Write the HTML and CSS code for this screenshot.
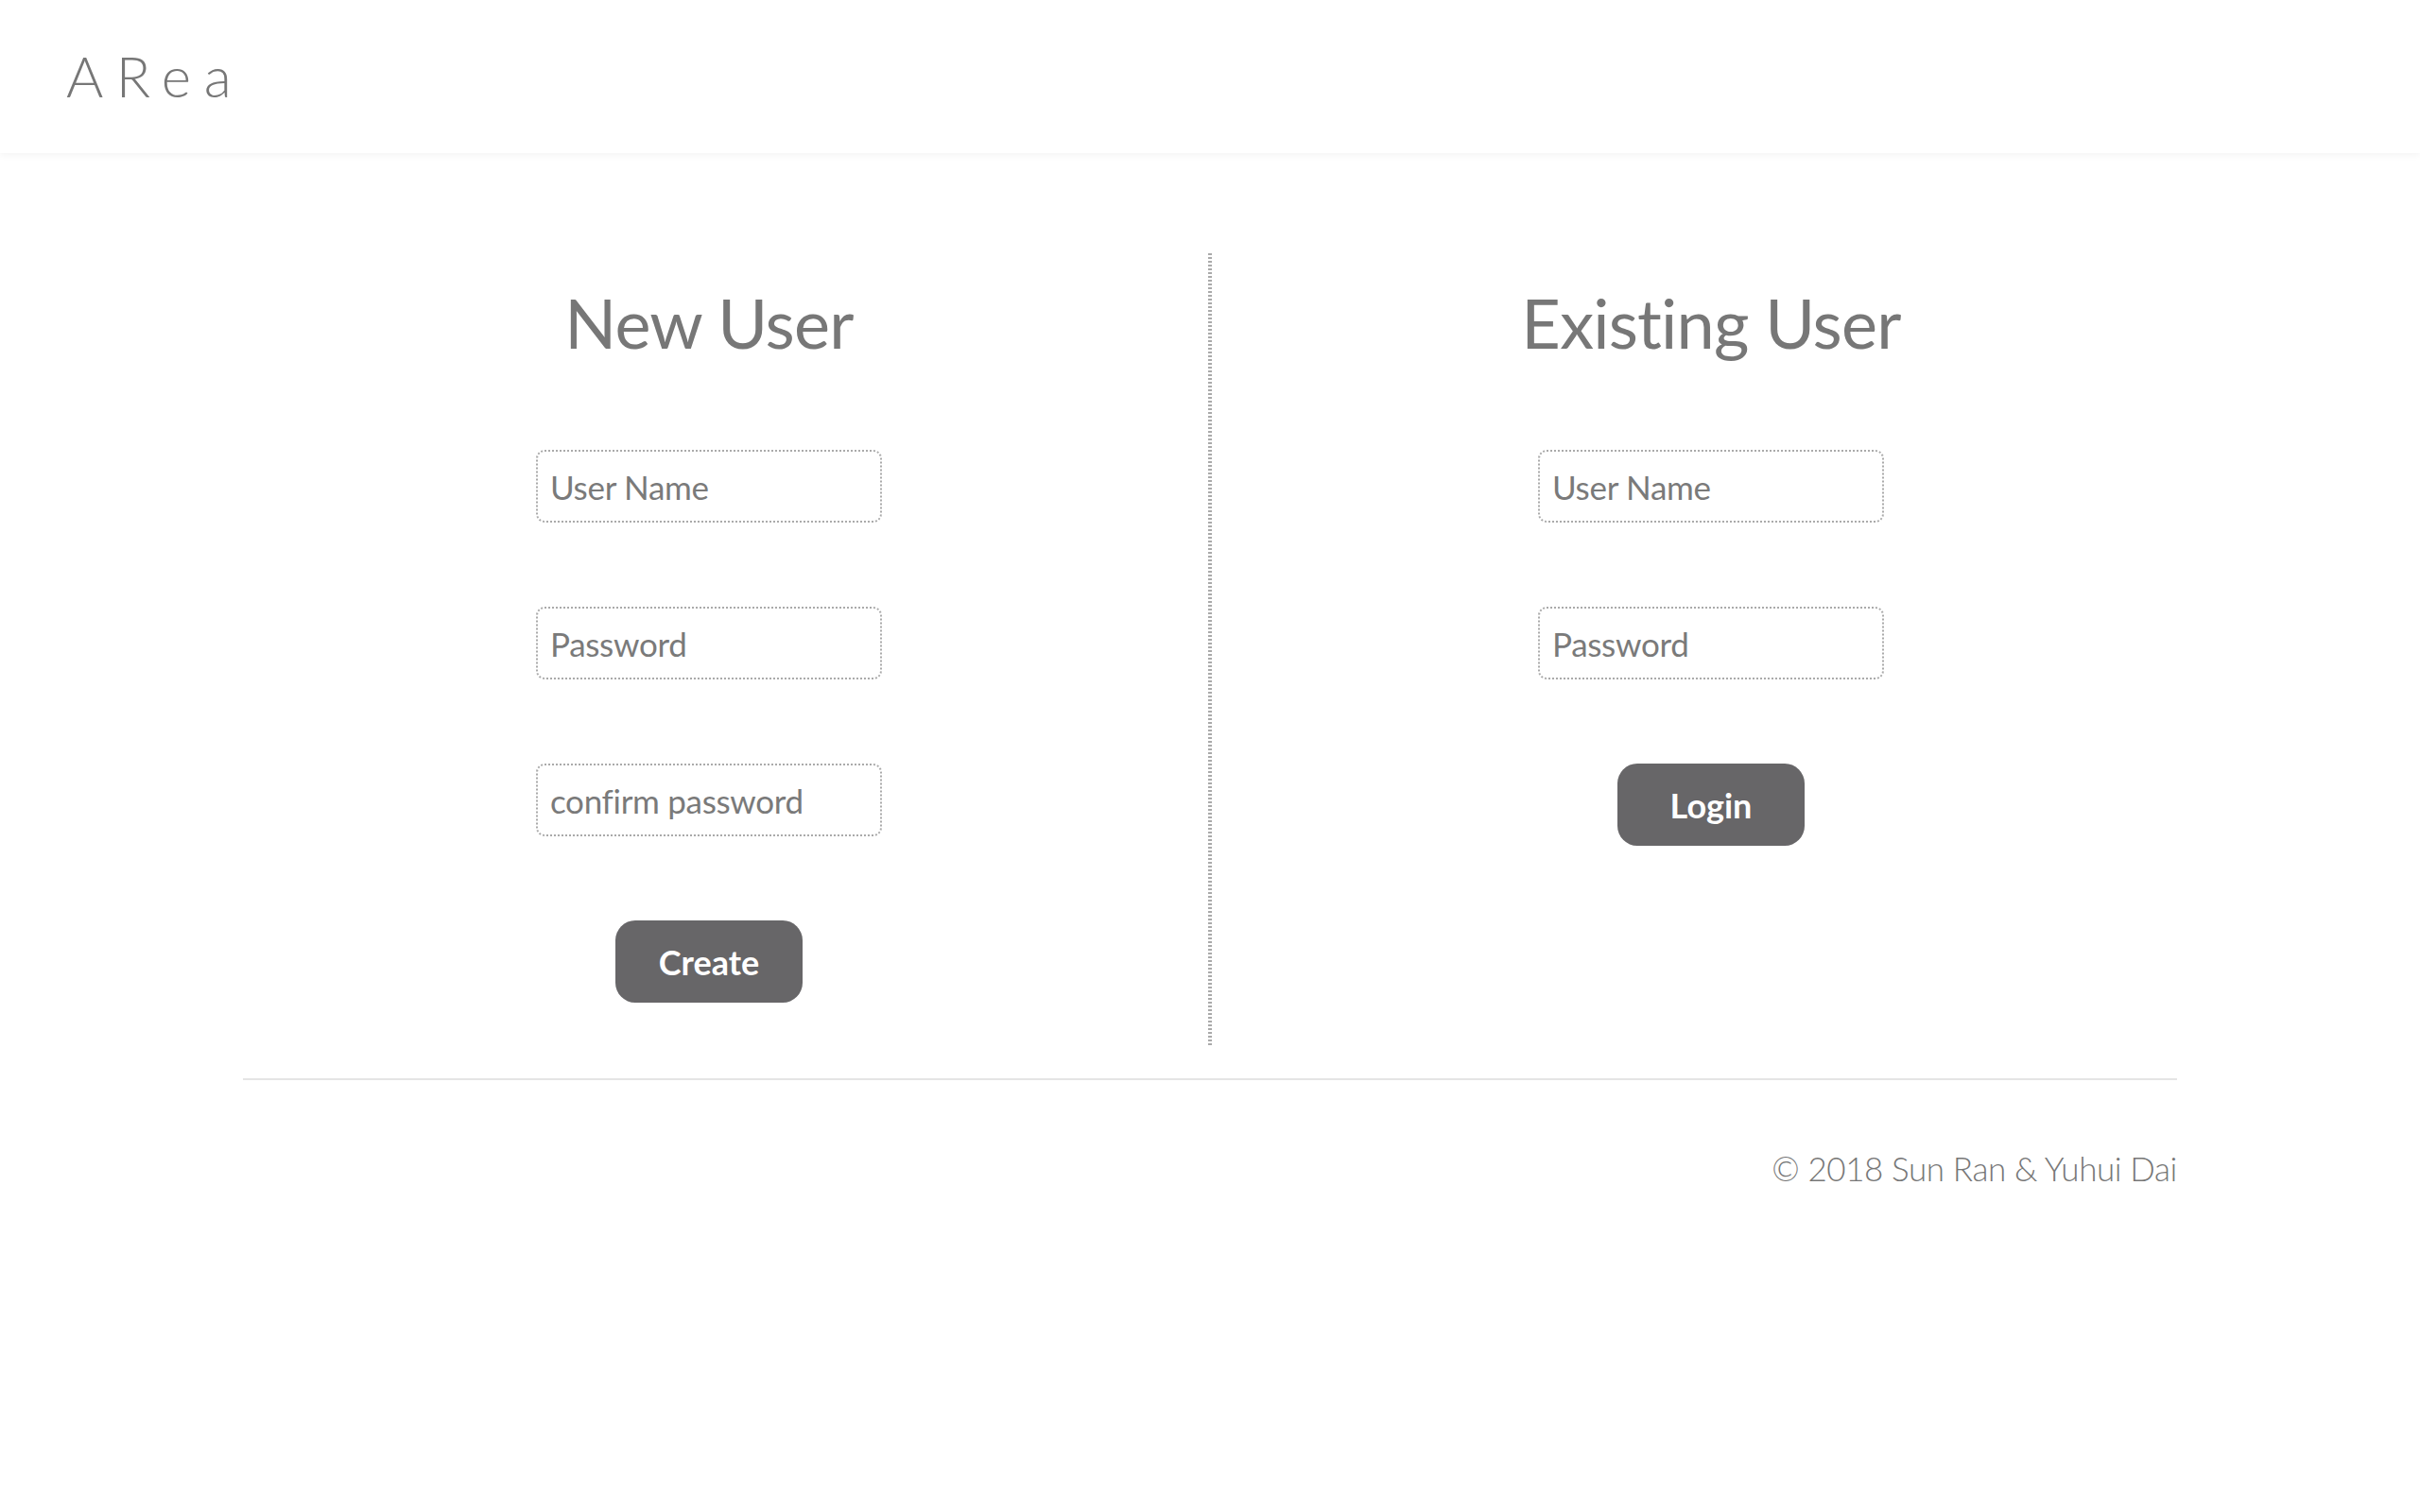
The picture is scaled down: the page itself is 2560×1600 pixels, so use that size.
FILE: index.html
```html
<!DOCTYPE html>
<html lang="en">
<head>
<meta charset="utf-8">
<title>ARea</title>
<link rel="stylesheet" href="styles.css">
</head>
<body>
<header class="topbar">
  <div class="brand">ARea</div>
</header>
<main class="panels">
  <section class="panel">
    <h1 class="panel-title">New User</h1>
    <form class="panel-form">
      <input class="field" type="text" placeholder="User Name">
      <input class="field" type="password" placeholder="Password">
      <input class="field" type="password" placeholder="confirm password">
      <button class="btn" type="button">Create</button>
    </form>
  </section>
  <div class="divider"></div>
  <section class="panel">
    <h1 class="panel-title">Existing User</h1>
    <form class="panel-form">
      <input class="field" type="text" placeholder="User Name">
      <input class="field" type="password" placeholder="Password">
      <button class="btn" type="button">Login</button>
    </form>
  </section>
</main>
<footer class="footer">
  <hr class="footer-rule">
  <p class="copyright">© 2018 Sun Ran &amp; Yuhui Dai</p>
</footer>
</body>
</html>
```

FILE: styles.css
```css
* {
  box-sizing: border-box;
}

html, body {
  margin: 0;
  padding: 0;
  background: #ffffff;
}

body {
  font-family: "Lato", "Open Sans", "Liberation Sans", sans-serif;
  color: #777777;
}

.topbar {
  height: 162px;
  padding: 44px 0 0 70px;
  background: #ffffff;
  box-shadow: 0 2px 8px rgba(0, 0, 0, 0.05);
}

.brand {
  font-family: "Lato", sans-serif;
  font-weight: 300;
  font-size: 60px;
  line-height: 1.2;
  letter-spacing: 13.5px;
  color: #777777;
}

.panels {
  width: 2116px;
  margin: 106px auto 0;
  display: flex;
  align-items: stretch;
}

.panel {
  flex: 1 1 0;
  display: flex;
  flex-direction: column;
  align-items: center;
  padding: 30px 0 46px;
}

.divider {
  width: 4px;
  flex: 0 0 4px;
  background: repeating-linear-gradient(to bottom, #aaaaaa 0 2px, transparent 2px 4px);
}

.panel-title {
  margin: 0;
  font-weight: 400;
  font-size: 72px;
  line-height: 1.2;
  letter-spacing: -0.8px;
  font-variant-ligatures: none;
  color: #777777;
}

.panel-form {
  margin-top: 92px;
  display: flex;
  flex-direction: column;
  align-items: center;
  gap: 89px;
}

.field {
  width: 366px;
  height: 77px;
  padding: 0 13px;
  border: 2px dotted #aaaaaa;
  border-radius: 9px;
  font-family: "Lato", sans-serif;
  font-size: 35px;
  font-weight: 400;
  letter-spacing: -0.3px;
  color: #777777;
  background: #ffffff;
  outline: none;
}

.field::placeholder {
  color: #7a7a7a;
  opacity: 1;
}

.btn {
  width: 198px;
  height: 87px;
  border: none;
  border-radius: 21px;
  background: #676668;
  color: #ffffff;
  font-family: "Lato", sans-serif;
  font-size: 36px;
  font-weight: 700;
  cursor: pointer;
}

.footer {
  width: 2046px;
  margin: 34px auto 0;
}

.footer-rule {
  margin: 0;
  height: 2px;
  border: none;
  background: #e5e5e5;
}

.copyright {
  margin: 72px 0 0;
  text-align: right;
  font-weight: 300;
  font-size: 35px;
  line-height: 1.2;
  letter-spacing: -0.4px;
  color: #777777;
}
```
